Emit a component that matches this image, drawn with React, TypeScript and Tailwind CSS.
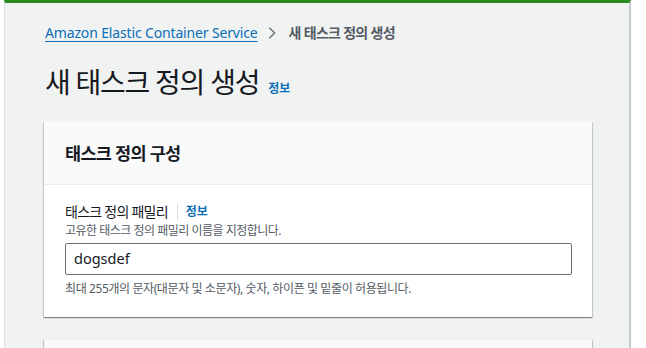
export default function App() {
  return (
    <div
      className="h-[348px] w-[646px] overflow-hidden bg-white text-[#16191f]"
      style={{ fontFamily: '"Noto Sans", "Noto Sans CJK KR", sans-serif' }}
    >
      <div className="ml-[4px] h-full w-[627px] border-t-[3px] border-l border-r-2 border-t-[#2b8a1f] border-l-[#dfe2e2] border-r-[#c4c9c9] bg-[#f1f2f2] pl-[39px] pr-[37px] pt-[20px]">
        {/* Breadcrumb */}
        <div className="flex h-[20px] items-center pl-px text-[14px] leading-[20px]">
          <span className="tracking-[-0.15px] text-[#0b6fb8] underline decoration-[#0b6fb8] underline-offset-[3px]">
            Amazon Elastic Container Service
          </span>
          <svg className="ml-[8px] mr-[11px] text-[#687078]" width="12" height="14" viewBox="0 0 12 16">
            <path d="M3 2l6 6-6 6" fill="none" stroke="currentColor" strokeWidth="1.6" />
          </svg>
          <span className="font-bold tracking-[-0.7px] text-[#545b64]">새 태스크 정의 생성</span>
        </div>

        {/* Title */}
        <div className="mt-[21px] flex items-baseline pl-px">
          <h1 className="text-[28px] font-normal leading-[36px] tracking-[-1.25px]">새 태스크 정의 생성</h1>
          <span className="ml-[9px] text-[12px] font-bold text-[#0b6fb8]">정보</span>
        </div>

        {/* Card */}
        <div className="mt-[22px] bg-white shadow-[0_1px_1px_0_rgba(0,28,36,0.3),1px_1px_1px_0_rgba(0,28,36,0.15),-1px_1px_1px_0_rgba(0,28,36,0.15)]">
          <div className="border-b border-[#eaeded] bg-[#fafafa] pl-[21px] pr-[20px] py-[20px]">
            <h2 className="text-[17.5px] font-bold leading-[22px] tracking-[-0.7px]">태스크 정의 구성</h2>
          </div>
          <div className="pb-[20px] pl-[21px] pr-[20px] pt-[17px]">
            <div className="flex items-center text-[14px] leading-[20px]">
              <span className="tracking-[-0.75px]">태스크 정의 패밀리</span>
              <span className="ml-[9px] mr-[8px] h-[16px] w-px bg-[#d5dbdb]" />
              <span className="text-[12px] font-bold text-[#0b6fb8]">정보</span>
            </div>
            <div className="mt-[1px] text-[12px] leading-[16px] tracking-[-0.5px] text-[#545b64]">
              고유한 태스크 정의 패밀리 이름을 지정합니다.
            </div>
            <div className="mt-[4px] flex h-[32px] items-center rounded-[2px] border border-[#687078] px-[8px] text-[14.5px]">
              dogsdef
            </div>
            <div className="mt-[6px] text-[12px] leading-[16px] tracking-[-0.4px] text-[#545b64]">
              최대 255개의 문자(대문자 및 소문자), 숫자, 하이픈 및 밑줄이 허용됩니다.
            </div>
          </div>
        </div>

        {/* Next card */}
        <div className="mt-[22px] h-[40px] border-t border-[#eaeded] bg-[#fafafa] shadow-[0_1px_1px_0_rgba(0,28,36,0.3),1px_1px_1px_0_rgba(0,28,36,0.15),-1px_1px_1px_0_rgba(0,28,36,0.15)]" />
      </div>
    </div>
  );
}
